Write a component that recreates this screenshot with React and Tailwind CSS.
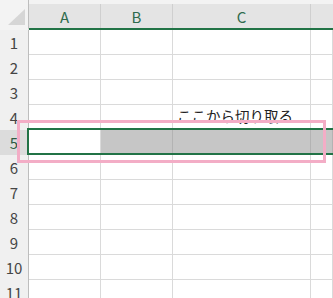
import React from "react";

const font = { fontFamily: '"Noto Sans CJK JP", "Noto Sans", sans-serif' };

const rows = [1, 2, 3, 4, 5, 6, 7, 8, 9, 10, 11];

function Cell({ w, gray, children, className = "" }) {
  return (
    <div
      className={`${w} h-full shrink-0 border-r border-b ${
        gray ? "bg-[#c6c6c6] border-[#b3b3b3]" : "bg-white border-[#dadada]"
      } ${className}`}
    >
      {children}
    </div>
  );
}

function Row({ n }) {
  const sel = n === 5;
  return (
    <div className="flex h-[25px]">
      <div
        className={`w-[29px] h-full shrink-0 border-r border-[#bdbdbd] flex items-center justify-center text-[15px] leading-none ${
          sel ? "bg-[#dcdcdc] text-[#2f5a43]" : "bg-[#f0f0f0] text-[#454545]"
        }`}
      >
        {n}
      </div>
      <Cell w="w-[72px]" />
      <Cell w="w-[72px]" gray={sel} />
      <Cell w="w-[138px]" gray={sel} className="flex items-end pl-[4px] pb-[6px]">
        {n === 4 && (
          <span className="text-[14.5px] leading-[15px] text-[#222] whitespace-nowrap">
            ここから切り取る
          </span>
        )}
      </Cell>
      <Cell w="flex-1" gray={sel} />
    </div>
  );
}

export default function App() {
  return (
    <div
      className="relative w-[333px] h-[298px] overflow-hidden bg-white"
      style={font}
    >
      {/* column headers */}
      <div className="flex h-[30px] bg-[#f3f3f3]">
        <div className="w-[29px] shrink-0 border-r border-[#bdbdbd] border-b-2 border-b-[#f3f3f3] relative">
          <svg width="29" height="28" className="absolute left-0 top-0">
            <polygon points="25,9 25,25 8,25" fill="#d6d6d6" />
          </svg>
        </div>
        <div className="flex-1 flex flex-col">
          <div className="h-[4px]" />
          <div className="flex flex-1 bg-[#e4e4e4] border-b-2 border-[#217346] text-[15px] text-[#2f6b4d] leading-none">
            <div className="w-[72px] shrink-0 border-r border-[#cfcfcf] flex items-center justify-center">A</div>
            <div className="w-[72px] shrink-0 border-r border-[#cfcfcf] flex items-center justify-center">B</div>
            <div className="w-[138px] shrink-0 border-r border-[#cfcfcf] flex items-center justify-center">C</div>
            <div className="flex-1" />
          </div>
        </div>
      </div>

      {rows.map((n) => (
        <Row key={n} n={n} />
      ))}

      {/* selection */}
      <div className="absolute left-[27px] top-[128px] w-[320px] h-[27px] border-2 border-[#217346]" />
      {/* highlight */}
      <div className="absolute left-[17px] top-[120px] w-[309px] h-[43px] border-[3px] border-[#f3adc6]" />
    </div>
  );
}
